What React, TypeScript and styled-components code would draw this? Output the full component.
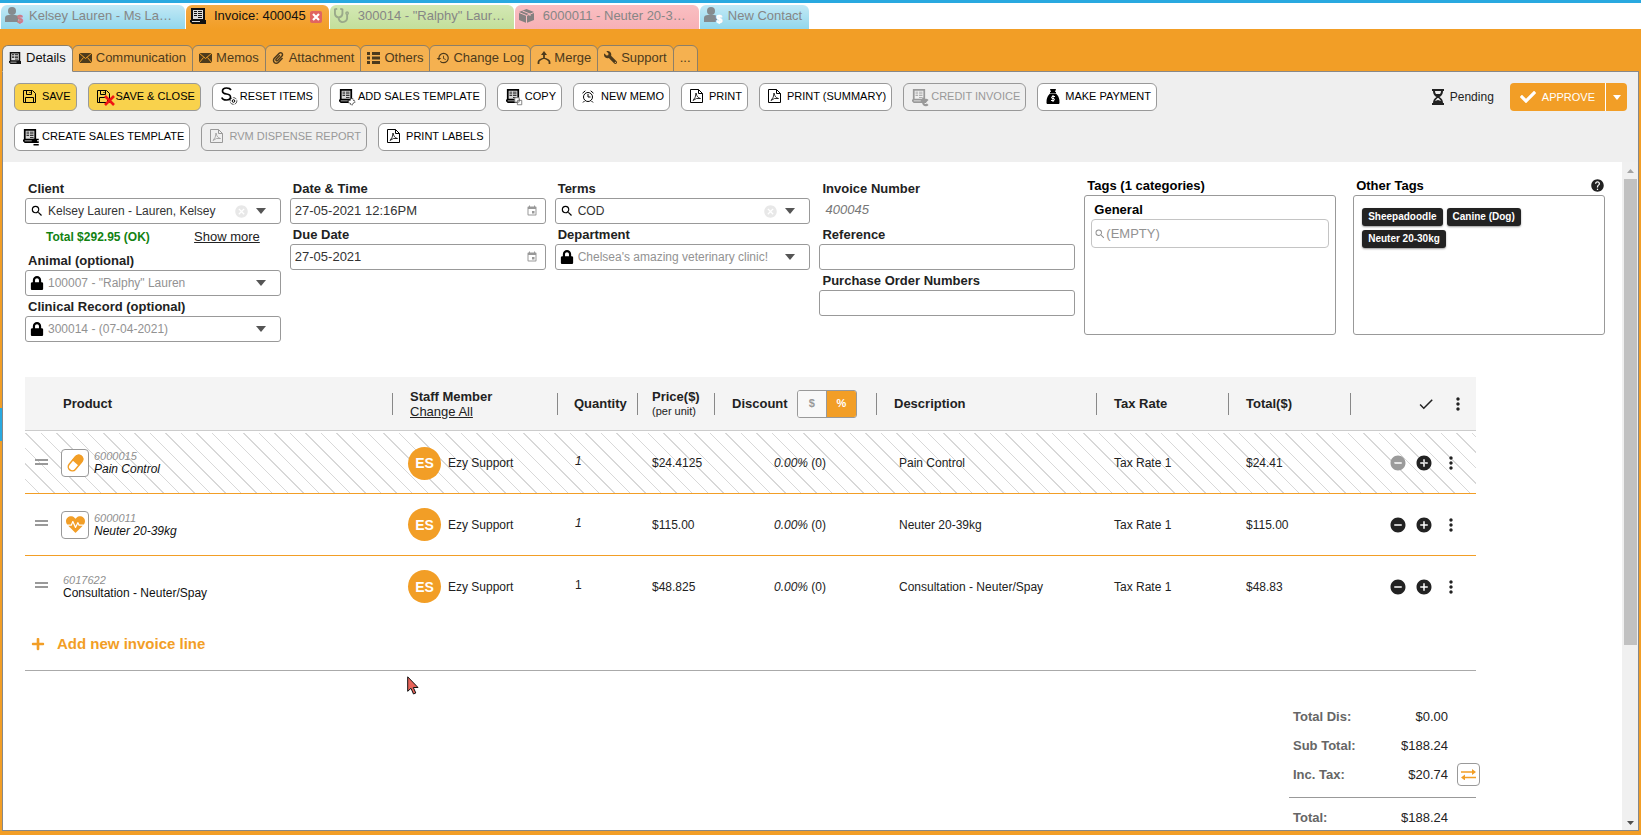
import React from 'react';
import styled, { createGlobalStyle, css } from 'styled-components';
import { FaStethoscope, FaPaperclip, FaWrench, FaCheck, FaLock, FaHeartbeat, FaPlus } from 'react-icons/fa';
import { MdHistory, MdSearch, MdCancel, MdEvent, MdHelp, MdRemoveCircle, MdAddCircle, MdMoreVert, MdCheck } from 'react-icons/md';

const ORANGE = '#f29e26';
const INK = '#222';
const LINE = '#999';

const GlobalStyle = createGlobalStyle`
  *, *::before, *::after { box-sizing: border-box; }
  body { margin: 0; background: ${ORANGE}; color: ${INK}; font: 13px/16px "Liberation Sans", Arial, sans-serif; }
  button, input, select { font: inherit; color: inherit; margin: 0; }
  button { cursor: pointer; padding: 0; background: none; border: 0; }
  svg { display: block; flex: none; }
`;

/* ---------- drawings ---------- */

const InvoiceIcon = ({ size = 16, badge }: { size?: number; badge?: React.ReactNode }) => (
  <svg width={size} height={size} viewBox="0 0 16 16" overflow="visible" aria-hidden="true">
    <path fill="currentColor" d="M1 0h14v12h1v4H2L0 14v-2h1z" />
    <path fill="#fff" fillOpacity=".85" d="M3 2h10v9H3zM2 13h8v1H2z" />
    <path fill="currentColor" d="M4 3h3v1H4zM8 3h4v1H8zM4 5h3v1H4zM8 5h4v1H8zM4 7h3v1H4zM8 7h4v1H8zM8 9h4v1H8z" />
    {badge}
  </svg>
);

const BadgeText = styled.text`
  font-size: 11px;
  font-weight: 700;
`;

const PersonIcon = ({ tone }: { tone: string }) => (
  <svg width="19" height="17" viewBox="0 0 19 17" aria-hidden="true">
    <circle cx="7" cy="4" r="4" fill="#858b8e" />
    <path fill="#858b8e" d="M0 15V11q0-3 4-3h6q3 0 3 3v4z" />
    <BadgeText x="12" y="16" fill={tone} stroke={tone} strokeWidth=".5">$</BadgeText>
  </svg>
);

const BoxIcon = () => (
  <svg width="15" height="14" viewBox="0 0 15 14" aria-hidden="true">
    <path fill="#858080" d="M7.500 0L15 3v8l-7.500 3L0 11V3z" />
    <path fill="none" stroke="#f8bcc0" d="M0 3.500l7.500 3 7.500-3M7.500 6.500V14M3.500 2l7.500 3v2" />
  </svg>
);

const FloppyIcon = ({ cross }: { cross?: boolean }) => (
  <svg width="13" height="13" viewBox="0 0 13 13" fill="none" stroke="currentColor" overflow="visible" aria-hidden="true">
    <path d="M.5.5h9l3 3v9H.5zM3.500.5v4h5v-4M2.500 12V7.500h8V12M7 2v1" />
    {cross && <path d="M8 6l9 9M17 6l-9 9" stroke="#f01414" strokeWidth="2.600" />}
  </svg>
);

const ResetIcon = () => (
  <svg width="17" height="18" viewBox="0 0 17 18" fill="none" stroke="currentColor" overflow="visible" aria-hidden="true">
    <path strokeWidth="1.700" d="M10 3Q9 1 5.500 1 1.500 1 1.500 4q0 2.500 4 3t4 3q0 3-4 3T.800 10.500" />
    <circle cx="12.500" cy="14" r="3.400" strokeWidth="1" stroke="#555" strokeDasharray="4 1" />
    <circle cx="12.500" cy="14" r="1.300" strokeWidth="1" />
  </svg>
);

const PdfIcon = () => (
  <svg width="13" height="14" viewBox="0 0 13 14" fill="none" stroke="currentColor" aria-hidden="true">
    <path d="M.5.5h8l4 4v9H.5zM8.500.5v4h4" />
    <path strokeWidth=".8" d="M3 11.500q3-3 3-7.500 1 5 4.500 5.500Q6 8.500 3 11.500z" />
  </svg>
);

const AlarmIcon = () => (
  <svg width="12" height="13" viewBox="0 0 12 13" fill="none" stroke="currentColor" aria-hidden="true">
    <circle cx="6" cy="7" r="4.500" />
    <path d="M6 4v3h2.500M.5 3.200L3.300.8M11.500 3.200L8.700.8M2.500 11L1 12.500M9.500 11l1.500 1.500" />
  </svg>
);

const MoneyBagIcon = () => (
  <svg width="14" height="15" viewBox="0 0 14 15" aria-hidden="true">
    <path fill="currentColor" d="M4 0h6L9 3h1v1H4V3h1zM4 4.500h6q4 4 3.500 9.500l-.5 1H1l-.5-1Q0 8.500 4 4.500z" />
    <path fill="none" stroke="#fff" strokeWidth="1" d="M9 7.500H6q-1 1 0 2h2q1 1 0 2H5M7 6v7" />
  </svg>
);

const HourglassIcon = () => (
  <svg width="12" height="16" viewBox="0 0 12 16" aria-hidden="true">
    <path fill={INK} d="M0 0h12v2h-1q0 4-3.500 6 3.500 2 3.500 6h1v2H0v-2h1q0-4 3.500-6Q1 6 1 2H0z" />
    <path fill="#efefef" d="M3 2h6q0 2-1 3H4Q3 4 3 2zM5.500 9h1q2 2 2.500 3L6 11l-3 1q.5-1 2.500-3z" />
  </svg>
);

const MailIcon = () => (
  <svg width="13" height="10" viewBox="0 0 13 10" aria-hidden="true">
    <path fill="currentColor" d="M0 0h13v10H0z" />
    <path stroke={ORANGE} fill="none" d="M0 0l6.500 5.500L13 0M0 10l4.500-5.500M13 10L8.500 4.500" />
  </svg>
);

const ListIcon = () => (
  <svg width="13" height="12" viewBox="0 0 13 12" aria-hidden="true">
    <path fill="currentColor" d="M0 0h3v3H0zM5 0h8v3H5zM0 4.500h3v3H0zM5 4.500h8v3H5zM0 9h3v3H0zM5 9h8v3H5z" />
  </svg>
);

const MergeIcon = () => (
  <svg width="14" height="13" viewBox="0 0 14 13" fill="none" stroke="currentColor" strokeWidth="1.800" aria-hidden="true">
    <path d="M7 3v4M1.500 13v-2q0-2 5.500-4 5.500 2 5.500 4v2" />
    <path d="M7 0l3 4H4z" fill="currentColor" stroke="none" />
  </svg>
);

const CapsuleIcon = () => (
  <svg width="19" height="20" viewBox="0 0 19 20" aria-hidden="true">
    <g transform="rotate(40 9.500 10)">
      <rect x="5.500" y="1" width="8" height="18" rx="4" fill="#fff" stroke={ORANGE} strokeWidth="1.500" />
      <path fill={ORANGE} d="M5 10V5q0-4.500 4.500-4.500T14 5v5z" />
    </g>
  </svg>
);

const SwapIcon = () => (
  <svg width="15" height="11" viewBox="0 0 15 11" stroke={ORANGE} fill={ORANGE} aria-hidden="true">
    <path strokeWidth="1.500" d="M0 3h12M3 8.500h12" />
    <path stroke="none" d="M11 0l4 3-4 3zM4 5.500L0 8.500l4 3z" />
  </svg>
);

const Caret = ({ w = 10, h = 6 }: { w?: number; h?: number }) => (
  <svg width={w} height={h} viewBox="0 0 10 6" preserveAspectRatio="none" fill="currentColor" aria-hidden="true">
    <path d="M0 0h10L5 6z" />
  </svg>
);

const Cursor = styled.svg`
  position: absolute;
  left: 407px;
  top: 676px;
`;

/* ---------- window frame ---------- */

const Shell = styled.div`
  position: relative;
  height: 100vh;
  display: flex;
  flex-direction: column;
  overflow: hidden;
  background: ${ORANGE};
`;

const EdgeMark = styled.span`
  position: absolute;
  left: 0;
  top: 408px;
  width: 2px;
  height: 33px;
  background: #29a9e0;
`;

const WindowTabs = styled.nav`
  display: flex;
  align-items: flex-end;
  gap: 1px;
  height: 29px;
  flex: none;
  padding-left: 1px;
  border-top: 3px solid #29a9e0;
  background: #fff;
`;

const tones = {
  blue: 'linear-gradient(#c2e9f6, #92d7ec)',
  orange: 'linear-gradient(#f5ab45, #f29e26)',
  green: 'linear-gradient(#d3e8b4, #c3df9b)',
  pink: 'linear-gradient(#f9bfc2, #f7b0b5)',
};

const WindowTab = styled.a<{ $tone: keyof typeof tones; $active?: boolean; $wide?: boolean }>`
  display: flex;
  align-items: center;
  height: 24px;
  width: ${p => (p.$wide ? '184px' : 'auto')};
  padding: 0 7px 3px 4px;
  border-radius: 6px 6px 0 0;
  background: ${p => tones[p.$tone]};
  color: ${p => (p.$active ? '#111' : '#868686')};
  text-decoration: none;
  white-space: nowrap;
`;

const TabIcon = styled.span`
  display: flex;
  width: 24px;
  flex: none;
`;

const CloseTab = styled.button`
  display: grid;
  place-items: center;
  width: 12px;
  height: 12px;
  margin: 2px 0 0 4px;
  border-radius: 2px;
  background: #e06461;
`;

const SubTabs = styled.nav`
  display: flex;
  flex: none;
  padding: 16px 0 0 2px;
  color: #4c3a1c;
`;

const SubTab = styled.a<{ $active?: boolean }>`
  display: flex;
  align-items: center;
  height: 27px;
  margin: 0 0 -1px -1px;
  padding: 0 6px 2px;
  border: 1px solid #8c7f68;
  border-radius: 6px 6px 0 0;
  background: #f5b150;
  color: inherit;
  text-decoration: none;
  &:first-child { margin-left: 0; }
  ${p => p.$active && css`
    position: relative;
    z-index: 1;
    background: #efefef;
    border-bottom-color: #efefef;
    color: #111;
  `}
`;

const SubTabIcon = styled.span`
  display: flex;
  align-items: center;
  width: 17px;
`;

const Mirrored = styled.span`
  display: flex;
  transform: scaleX(-1);
`;

const Panel = styled.main`
  flex: 1;
  min-height: 0;
  display: flex;
  flex-direction: column;
  margin: 0 2px 4px;
  border: 1px solid #888;
  background: #fff;
`;

/* ---------- toolbar ---------- */

const Toolbar = styled.div`
  display: flex;
  align-items: flex-start;
  flex: none;
  padding: 11px;
  background: #efefef;
`;

const Actions = styled.div`
  flex: 1;
  display: flex;
  flex-wrap: wrap;
  gap: 12px 11px;
`;

const Action = styled.button<{ $primary?: boolean }>`
  display: flex;
  align-items: center;
  height: 28px;
  padding: 0 5px 2px 7px;
  border: 1px solid ${LINE};
  border-radius: 6px;
  background: ${p => (p.$primary ? '#f9d24c' : '#fff')};
  color: #000;
  font-size: 11px;
  &:disabled { background: transparent; color: #999; }
`;

const ActionIcon = styled.span`
  display: flex;
  width: 20px;
  padding-left: 1px;
`;

const Status = styled.div`
  display: flex;
  align-items: center;
  padding-left: 100px;
  font-size: 12px;
  gap: 6px;
`;

const Approve = styled.div`
  display: flex;
  height: 28px;
  margin-left: 10px;
  border-radius: 4px;
  overflow: hidden;
`;

const ApproveButton = styled.button`
  display: flex;
  align-items: center;
  justify-content: center;
  gap: 6px;
  min-width: 22px;
  padding: 0 10px;
  background: ${ORANGE};
  color: #fff;
  font-size: 11px;
  & + & { padding: 0; border-left: 1px solid #fff; }
`;

/* ---------- scrolling body ---------- */

const Body = styled.div`
  flex: 1;
  min-height: 0;
  display: flex;
`;

const Content = styled.div`
  flex: 1;
  min-width: 0;
  overflow: hidden;
  padding: 16px 17px 0 22px;
`;

const ScrollTrack = styled.div`
  display: flex;
  flex-direction: column;
  align-items: center;
  width: 16px;
  padding: 7px 0 5px;
  background: #f0f0f0;
  color: #a3a3a3;
`;

const ScrollThumb = styled.div`
  width: 13px;
  height: 71%;
  margin: 6px 0 auto;
  background: #c1c1c1;
`;

const Up = styled.span`
  transform: rotate(180deg);
`;

const Down = styled.span`
  color: #505050;
`;

/* ---------- invoice form ---------- */

const Form = styled.form`
  display: grid;
  grid-template-columns: repeat(4, minmax(0, 256fr)) minmax(0, 252fr) minmax(0, 260fr);
  column-gap: 9px;
  align-items: start;
`;

const Column = styled.div`
  display: flex;
  flex-direction: column;
`;

const Label = styled.label`
  height: 20px;
  padding: 3px 3px 0;
  font-weight: 700;
`;

const FieldBox = styled.div<{ $locked?: boolean }>`
  display: flex;
  align-items: center;
  height: 26px;
  border: 1px solid ${LINE};
  border-radius: 3px;
  background: #fff;
  color: ${p => (p.$locked ? '#929292' : '#333')};
  padding: 0 7px 0 4px;
`;

const FieldIcon = styled.span`
  display: flex;
  justify-content: center;
  flex: none;
  width: 14px;
  margin-right: 4px;
  color: #000;
`;

const control = css`
  flex: 1;
  min-width: 0;
  width: 100%;
  padding: 0;
  border: 0;
  outline: 0;
  background: none;
`;

const Input = styled.input<{ $small?: boolean }>`
  ${control}
  font-size: ${p => (p.$small ? '12px' : '13px')};
`;

const Select = styled.select`
  ${control}
  appearance: none;
  font-size: 12px;
  &:disabled { color: inherit; opacity: 1; }
`;

const CaretSlot = styled.span`
  display: flex;
  color: #555;
  padding: 0 7px;
`;

const IconButton = styled.button<{ $color?: string }>`
  display: flex;
  flex: none;
  color: ${p => p.$color || 'inherit'};
  &:disabled { color: #9b9b9b; }
`;

const Balance = styled.div`
  display: flex;
  justify-content: space-between;
  align-items: center;
  height: 26px;
  padding: 0 21px;
  font-size: 12px;
  font-weight: 700;
  color: #128212;
`;

const TextLink = styled.a`
  color: ${INK};
  font-size: 13px;
  font-weight: 400;
  text-decoration: underline;
`;

const InvoiceNo = styled.output`
  height: 26px;
  padding: 4px 6px;
  color: #777;
  font-style: italic;
`;

const TagColumn = styled(Column)<{ $last?: boolean }>`
  margin-top: -3px;
  margin-left: ${p => (p.$last ? '8px' : 0)};
`;

const TagHeading = styled.div`
  display: flex;
  justify-content: space-between;
  height: 20px;
  padding: 3px 0 0 3px;
  color: #000;
  font-weight: 700;
`;

const TagBox = styled.div`
  height: 140px;
  padding: 5px 6px;
  border: 1px solid ${LINE};
  border-radius: 3px;
`;

const TagField = styled(FieldBox)`
  height: 29px;
  padding: 0 2px;
  border-color: #c4c4c4;
  border-radius: 4px;
  color: #929292;
`;

const TagLabel = styled(Label)`
  display: block;
  height: 18px;
  padding: 1px 3px;
  color: #000;
`;

const Chips = styled.div`
  display: flex;
  flex-wrap: wrap;
  gap: 4px;
  max-width: 200px;
  padding: 7px 2px;
`;

const Chip = styled.span`
  height: 18px;
  padding: 0 6px;
  border-radius: 3px;
  background: ${INK};
  box-shadow: 0 1px 2px #0006;
  color: #fff;
  font-size: 10px;
  font-weight: 700;
  line-height: 18px;
`;

/* ---------- invoice lines ---------- */

const Lines = styled.section`
  margin: 35px 129px 0 0;
`;

const Table = styled.table`
  width: 100%;
  table-layout: fixed;
  border-collapse: separate;
  border-spacing: 0;
  font-size: 12px;
`;

const HeadCell = styled.th`
  height: 54px;
  padding: 0;
  border-bottom: 1px solid #ccc;
  background: #f4f4f4;
  font-size: 13px;
  line-height: 15px;
  text-align: left;
`;

const HeadInner = styled.div<{ $pad: number; $bare?: boolean }>`
  position: relative;
  display: flex;
  align-items: center;
  gap: 9px;
  padding-left: ${p => p.$pad}px;
  height: 32px;
  white-space: nowrap;
  ${p => !p.$bare && css`
    &::after {
      content: "";
      position: absolute;
      right: 0;
      top: 5px;
      height: 22px;
      border-right: 1px solid #888;
    }
  `}
`;

const HeadNote = styled.span`
  display: block;
  font-size: 11px;
  font-weight: 400;
`;

const HeadTools = styled.div`
  display: flex;
  justify-content: flex-end;
  align-items: center;
  gap: 13px;
  padding-right: 8px;
`;

const Toggle = styled.div`
  display: flex;
  width: 60px;
  height: 28px;
  border: 1px solid ${LINE};
  border-radius: 3px;
  overflow: hidden;
`;

const ToggleButton = styled.button<{ $on?: boolean }>`
  flex: 1;
  background: ${p => (p.$on ? ORANGE : '#f8f8f8')};
  border-right: ${p => (p.$on ? 0 : `1px solid ${LINE}`)};
  color: ${p => (p.$on ? '#fff' : '#999')};
  font-size: 11px;
  font-weight: 700;
`;

const Cell = styled.td<{ $pad?: number }>`
  padding: 0 0 0 ${p => p.$pad || 0}px;
  white-space: nowrap;
`;

const Row = styled.tr<{ $hatched?: boolean; $last?: boolean }>`
  height: ${p => (p.$hatched ? '63px' : p.$last ? '61px' : '62px')};
  ${p => p.$hatched && css`
    background:
      linear-gradient(#fff, #fff) 0 0 / 100% 2px no-repeat,
      repeating-linear-gradient(45deg, transparent 0 10px, #d8d8d8 10px 11px);
    & > td { padding-top: 2px; }
  `}
  & > td { border-bottom: ${p => (p.$last ? 0 : `1px solid ${ORANGE}`)}; }
`;

const Quantity = styled(Cell)<{ $italic?: boolean }>`
  padding-bottom: 4px;
  font-style: ${p => (p.$italic ? 'italic' : 'normal')};
`;

const Grip = styled.span`
  display: block;
  width: 13px;
  height: 6px;
  margin: 0 0 3px 10px;
  border: solid #999;
  border-width: 2px 0;
`;

const Product = styled.div<{ $italic?: boolean }>`
  display: flex;
  align-items: center;
  gap: 5px;
  font-style: ${p => (p.$italic ? 'italic' : 'normal')};
  line-height: 13px;
  color: #111;
`;

const Code = styled.span`
  display: block;
  color: #8f8f8f;
  font-size: 11px;
  font-style: italic;
`;

const KindButton = styled.button`
  display: grid;
  place-items: center;
  width: 28px;
  height: 28px;
  margin-left: -2px;
  border: 1px solid ${LINE};
  border-radius: 4px;
  background: #fff;
  color: ${ORANGE};
`;

const Staff = styled.div`
  display: flex;
  align-items: center;
  gap: 7px;
`;

const Avatar = styled.span`
  display: grid;
  place-items: center;
  width: 33px;
  height: 33px;
  border-radius: 50%;
  background: ${ORANGE};
  color: #fff;
  font-size: 14px;
  font-weight: 700;
`;

const Tools = styled.div`
  display: flex;
  justify-content: flex-end;
  align-items: center;
  gap: 8px;
  padding-right: 15px;
  color: ${INK};
`;

const AddLine = styled.div`
  display: flex;
  align-items: center;
  height: 54px;
  padding-left: 6px;
  border-bottom: 1px solid #aaa;
`;

const AddButton = styled.button`
  display: flex;
  align-items: center;
  gap: 12px;
  color: ${ORANGE};
  font-size: 15px;
  font-weight: 700;
`;

/* ---------- totals ---------- */

const Totals = styled.section`
  width: 191px;
  margin: 0 125px 0 auto;
  padding-top: 31px;
`;

const TotalRow = styled.div`
  display: grid;
  grid-template-columns: 1fr auto 23px;
  column-gap: 9px;
  align-items: center;
  height: 29px;
  padding-left: 4px;
`;

const TotalName = styled.span`
  color: #666;
  font-weight: 700;
`;

const Rule = styled.hr`
  margin: 8px 4px 5px 0;
  border: 0;
  border-top: 1px solid ${LINE};
`;

const SwapButton = styled.button`
  display: grid;
  place-items: center;
  width: 23px;
  height: 23px;
  border: 1px solid ${LINE};
  border-radius: 4px;
`;

/* ---------- data ---------- */

const subTabs: { name: string; icon: React.ReactNode; active?: boolean }[] = [
  { name: 'Details', icon: <InvoiceIcon size={12} />, active: true },
  { name: 'Communication', icon: <MailIcon /> },
  { name: 'Memos', icon: <MailIcon /> },
  { name: 'Attachment', icon: <FaPaperclip size={12} /> },
  { name: 'Others', icon: <ListIcon /> },
  { name: 'Change Log', icon: <MdHistory size={14} /> },
  { name: 'Merge', icon: <MergeIcon /> },
  { name: 'Support', icon: <Mirrored><FaWrench size={13} /></Mirrored> },
];

const addBadge = <path d="M13 11v2h-2v3h2v2h3v-2h2v-3h-2v-2z" fill="#fff" stroke="#444" strokeDasharray="2 1" />;
const stackBadge = <path d="M12 12h6M12 15h6M12 18h6" stroke="currentColor" strokeWidth="1.800" fill="none" />;
const copyBadge = <path d="M10 10h5v5h-5zM13 13h5v5h-5z" fill="#fff" stroke="#777" />;
const creditBadge = <path d="M18 13.500a3 3 0 1 0 0 4M13 10v4h4" stroke="currentColor" strokeWidth="2.500" fill="none" />;

const actions: { name: string; icon: React.ReactNode; primary?: boolean; disabled?: boolean }[] = [
  { name: 'SAVE', icon: <FloppyIcon />, primary: true },
  { name: 'SAVE & CLOSE', icon: <FloppyIcon cross />, primary: true },
  { name: 'RESET ITEMS', icon: <ResetIcon /> },
  { name: 'ADD SALES TEMPLATE', icon: <InvoiceIcon size={14} badge={addBadge} /> },
  { name: 'COPY', icon: <InvoiceIcon size={14} badge={copyBadge} /> },
  { name: 'NEW MEMO', icon: <AlarmIcon /> },
  { name: 'PRINT', icon: <PdfIcon /> },
  { name: 'PRINT (SUMMARY)', icon: <PdfIcon /> },
  { name: 'CREDIT INVOICE', icon: <InvoiceIcon size={14} badge={creditBadge} />, disabled: true },
  { name: 'MAKE PAYMENT', icon: <MoneyBagIcon /> },
  { name: 'CREATE SALES TEMPLATE', icon: <InvoiceIcon size={14} badge={stackBadge} /> },
  { name: 'RVM DISPENSE REPORT', icon: <PdfIcon />, disabled: true },
  { name: 'PRINT LABELS', icon: <PdfIcon /> },
];

const lines: { code: string; name: string; price: string; total: string; icon?: React.ReactNode; hatched?: boolean }[] = [
  { code: '6000015', name: 'Pain Control', price: '$24.4125', total: '$24.41', icon: <CapsuleIcon />, hatched: true },
  { code: '6000011', name: 'Neuter 20-39kg', price: '$115.00', total: '$115.00', icon: <FaHeartbeat size={19} /> },
  { code: '6017622', name: 'Consultation - Neuter/Spay', price: '$48.825', total: '$48.83' },
];

const columnWidths = ['38', '330', '165', '80', '77', '162', '220', '132', '122', '125'];

/* ---------- fields ---------- */

const SearchField = ({ id, label, value }: { id: string; label: string; value: string }) => (
  <>
    <Label htmlFor={id}>{label}</Label>
    <FieldBox>
      <FieldIcon><MdSearch size={14} /></FieldIcon>
      <Input id={id} $small defaultValue={value} />
      <IconButton type="button" aria-label={`Clear ${label}`} $color="#e8e8e8"><MdCancel size={15} /></IconButton>
      <IconButton type="button" aria-label={`Open ${label}`}><CaretSlot><Caret /></CaretSlot></IconButton>
    </FieldBox>
  </>
);

const LockedField = ({ id, label, value }: { id: string; label: string; value: string }) => (
  <>
    <Label htmlFor={id}>{label}</Label>
    <FieldBox $locked>
      <FieldIcon><FaLock size={14} /></FieldIcon>
      <Select id={id} disabled><option>{value}</option></Select>
      <CaretSlot><Caret /></CaretSlot>
    </FieldBox>
  </>
);

const DateField = ({ id, label, value }: { id: string; label: string; value: string }) => (
  <>
    <Label htmlFor={id}>{label}</Label>
    <FieldBox>
      <Input id={id} defaultValue={value} />
      <IconButton type="button" aria-label={`Pick ${label}`} $color="#999"><MdEvent size={12} /></IconButton>
    </FieldBox>
  </>
);

const PlainField = ({ id, label }: { id: string; label: string }) => (
  <>
    <Label htmlFor={id}>{label}</Label>
    <FieldBox><Input id={id} /></FieldBox>
  </>
);

export default function App() {
  return (
    <Shell>
      <GlobalStyle />
      <WindowTabs aria-label="Open records">
        <WindowTab href="#client" $tone="blue" $wide><TabIcon><PersonIcon tone="#cc7d85" /></TabIcon>Kelsey Lauren - Ms La…</WindowTab>
        <WindowTab href="#invoice" $tone="orange" $active>
          <TabIcon><InvoiceIcon /></TabIcon>Invoice: 400045
          <CloseTab aria-label="Close tab">
            <svg width="8" height="8" viewBox="0 0 8 8" stroke="#fff" strokeWidth="2.200"><path d="M1 1l6 6M7 1L1 7" /></svg>
          </CloseTab>
        </WindowTab>
        <WindowTab href="#record" $tone="green" $wide><TabIcon><FaStethoscope size={15} color="#9aa98a" /></TabIcon>300014 - "Ralphy" Laur…</WindowTab>
        <WindowTab href="#product" $tone="pink" $wide><TabIcon><BoxIcon /></TabIcon>6000011 - Neuter 20-3…</WindowTab>
        <WindowTab href="#contact" $tone="blue"><TabIcon><PersonIcon tone="#fff" /></TabIcon>New Contact</WindowTab>
      </WindowTabs>

      <SubTabs aria-label="Invoice sections">
        {subTabs.map(t => (
          <SubTab key={t.name} href="#section" $active={t.active}><SubTabIcon>{t.icon}</SubTabIcon>{t.name}</SubTab>
        ))}
        <SubTab href="#more">...</SubTab>
      </SubTabs>

      <Panel>
        <Toolbar>
          <Actions>
            {actions.map(a => (
              <Action key={a.name} $primary={a.primary} disabled={a.disabled}><ActionIcon>{a.icon}</ActionIcon>{a.name}</Action>
            ))}
          </Actions>
          <Status>
            <HourglassIcon />
            <span>Pending</span>
            <Approve>
              <ApproveButton><FaCheck size={16} />APPROVE</ApproveButton>
              <ApproveButton aria-label="More approval options"><Caret w={8} h={5} /></ApproveButton>
            </Approve>
          </Status>
        </Toolbar>

        <Body>
          <Content>
            <Form>
              <Column>
                <SearchField id="client" label="Client" value="Kelsey Lauren - Lauren, Kelsey" />
                <Balance>Total $292.95 (OK)<TextLink href="#more-client">Show more</TextLink></Balance>
                <LockedField id="animal" label="Animal (optional)" value={'100007 - "Ralphy" Lauren'} />
                <LockedField id="clinical" label="Clinical Record (optional)" value="300014 - (07-04-2021)" />
              </Column>
              <Column>
                <DateField id="date" label="Date & Time" value="27-05-2021 12:16PM" />
                <DateField id="due" label="Due Date" value="27-05-2021" />
              </Column>
              <Column>
                <SearchField id="terms" label="Terms" value="COD" />
                <LockedField id="department" label="Department" value="Chelsea's amazing veterinary clinic!" />
              </Column>
              <Column>
                <Label htmlFor="number">Invoice Number</Label>
                <InvoiceNo id="number">400045</InvoiceNo>
                <PlainField id="reference" label="Reference" />
                <PlainField id="po" label="Purchase Order Numbers" />
              </Column>
              <TagColumn>
                <TagHeading>Tags (1 categories)</TagHeading>
                <TagBox>
                  <TagLabel htmlFor="general">General</TagLabel>
                  <TagField>
                    <MdSearch size={12} />
                    <Input id="general" defaultValue="(EMPTY)" />
                  </TagField>
                </TagBox>
              </TagColumn>
              <TagColumn $last>
                <TagHeading>Other Tags<IconButton type="button" aria-label="Help"><MdHelp size={15} color={INK} /></IconButton></TagHeading>
                <TagBox>
                  <Chips><Chip>Sheepadoodle</Chip><Chip>Canine (Dog)</Chip><Chip>Neuter 20-30kg</Chip></Chips>
                </TagBox>
              </TagColumn>
            </Form>

            <Lines>
              <Table>
                <colgroup>{columnWidths.map((w, i) => <col key={i} width={w} />)}</colgroup>
                <thead>
                  <tr>
                    <HeadCell aria-label="Order" />
                    <HeadCell><HeadInner $pad={0}>Product</HeadInner></HeadCell>
                    <HeadCell><HeadInner $pad={17}><div>Staff Member<br /><TextLink href="#change-all">Change All</TextLink></div></HeadInner></HeadCell>
                    <HeadCell><HeadInner $pad={16}>Quantity</HeadInner></HeadCell>
                    <HeadCell><HeadInner $pad={14}><div>Price($)<HeadNote>(per unit)</HeadNote></div></HeadInner></HeadCell>
                    <HeadCell>
                      <HeadInner $pad={17}>
                        Discount
                        <Toggle><ToggleButton>$</ToggleButton><ToggleButton $on>%</ToggleButton></Toggle>
                      </HeadInner>
                    </HeadCell>
                    <HeadCell><HeadInner $pad={17}>Description</HeadInner></HeadCell>
                    <HeadCell><HeadInner $pad={17}>Tax Rate</HeadInner></HeadCell>
                    <HeadCell><HeadInner $pad={17}>Total($)</HeadInner></HeadCell>
                    <HeadCell>
                      <HeadTools>
                        <IconButton aria-label="Select all"><MdCheck size={18} /></IconButton>
                        <IconButton aria-label="Table menu"><MdMoreVert size={20} /></IconButton>
                      </HeadTools>
                    </HeadCell>
                  </tr>
                </thead>
                <tbody>
                  {lines.map((l, i) => (
                    <Row key={l.code} $hatched={l.hatched} $last={i === lines.length - 1}>
                      <Cell><Grip /></Cell>
                      <Cell>
                        <Product $italic={!!l.icon}>
                          {l.icon && <KindButton aria-label={l.name}>{l.icon}</KindButton>}
                          <div><Code>{l.code}</Code>{l.name}</div>
                        </Product>
                      </Cell>
                      <Cell $pad={15}><Staff><Avatar>ES</Avatar>Ezy Support</Staff></Cell>
                      <Quantity $pad={17} $italic={!!l.icon}>1</Quantity>
                      <Cell $pad={14}>{l.price}</Cell>
                      <Cell $pad={59}><i>0.00%</i> (0)</Cell>
                      <Cell $pad={22}>{l.name}</Cell>
                      <Cell $pad={17}>Tax Rate 1</Cell>
                      <Cell $pad={17}>{l.total}</Cell>
                      <Cell>
                        <Tools>
                          <IconButton aria-label="Remove" disabled={l.hatched}><MdRemoveCircle size={18} /></IconButton>
                          <IconButton aria-label="Add"><MdAddCircle size={18} /></IconButton>
                          <IconButton aria-label="Line menu"><MdMoreVert size={20} /></IconButton>
                        </Tools>
                      </Cell>
                    </Row>
                  ))}
                </tbody>
              </Table>
              <AddLine><AddButton><FaPlus size={14} />Add new invoice line</AddButton></AddLine>
            </Lines>

            <Totals>
              <TotalRow><TotalName>Total Dis:</TotalName><span>$0.00</span></TotalRow>
              <TotalRow><TotalName>Sub Total:</TotalName><span>$188.24</span></TotalRow>
              <TotalRow>
                <TotalName>Inc. Tax:</TotalName><span>$20.74</span>
                <SwapButton aria-label="Switch tax mode"><SwapIcon /></SwapButton>
              </TotalRow>
              <Rule />
              <TotalRow><TotalName>Total:</TotalName><span>$188.24</span></TotalRow>
            </Totals>
          </Content>
          <ScrollTrack aria-hidden="true">
            <Up><Caret w={7} h={4} /></Up>
            <ScrollThumb />
            <Down><Caret w={7} h={4} /></Down>
          </ScrollTrack>
        </Body>
      </Panel>

      <EdgeMark />
      <Cursor width="12" height="19" viewBox="0 0 12 19" aria-hidden="true">
        <path d="M.7.8v14.500l3.300-3 2.500 5.700 2.300-1-2.500-5.500h4.700z" fill="#e8645a" stroke="#111" />
      </Cursor>
    </Shell>
  );
}
